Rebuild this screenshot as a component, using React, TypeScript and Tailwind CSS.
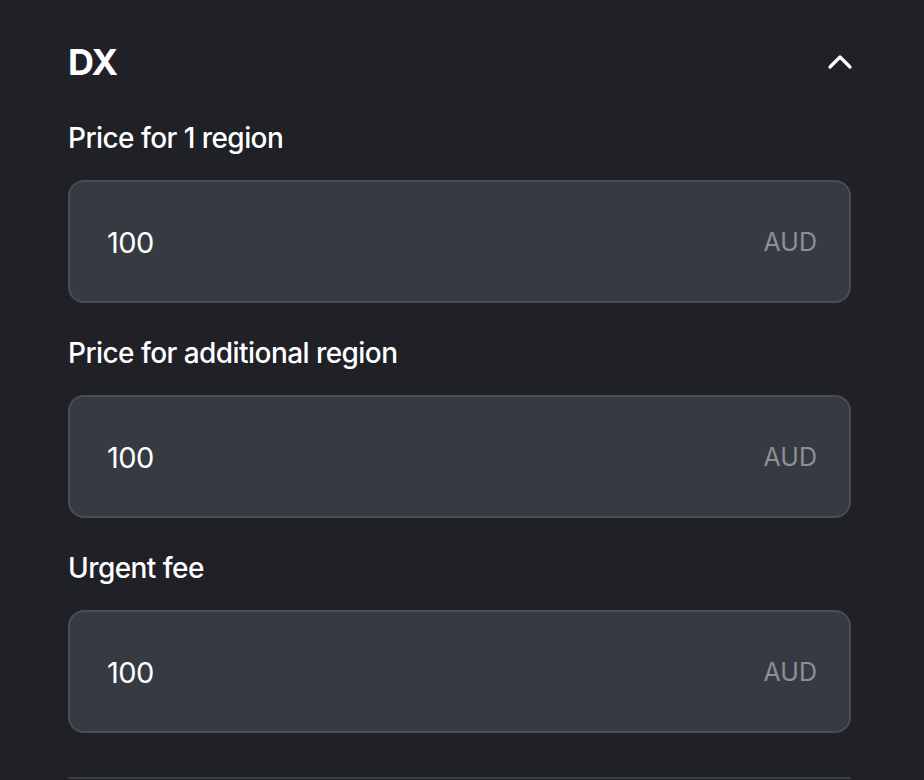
const fields = [
  { label: 'Price for 1 region', value: '100' },
  { label: 'Price for additional region', value: '100' },
  { label: 'Urgent fee', value: '100' },
]

function PriceField({ label, value }: { label: string; value: string }) {
  return (
    <div className="flex flex-col">
      <label className="text-[28px] leading-[36px] font-medium tracking-[-0.02em] text-white">{label}</label>
      <div className="mt-[24px] flex h-[123px] items-center justify-between rounded-[16px] border-2 border-[#4a4d54] bg-[#373a42] pl-[37px] pr-[32px] pt-[2px]">
        <span className="text-[29px] tracking-[-0.02em] text-white">{value}</span>
        <span className="text-[25px] text-[#8b8f97]">AUD</span>
      </div>
    </div>
  )
}

export default function App() {
  return (
    <div className="h-[780px] w-[924px] overflow-hidden bg-[#1f2126] font-['Inter',sans-serif]">
      <div className="ml-[68px] w-[783px] pt-[40px]">
        <div className="flex h-[44px] items-center justify-between">
          <h2 className="text-[36px] font-bold tracking-[-0.02em] text-white">DX</h2>
          <svg width="26" height="16" viewBox="0 0 26 16" fill="none" className="-mr-[2px]">
            <path d="M3 13 L13 3 L23 13" stroke="white" strokeWidth="3.2" strokeLinecap="round" strokeLinejoin="round" />
          </svg>
        </div>
        <div className="mt-[36px] flex flex-col gap-[32px]">
          {fields.map(f => (
            <PriceField key={f.label} label={f.label} value={f.value} />
          ))}
        </div>
        <div className="mt-[44px] border-t-2 border-[#3a3d44]" />
      </div>
    </div>
  )
}
